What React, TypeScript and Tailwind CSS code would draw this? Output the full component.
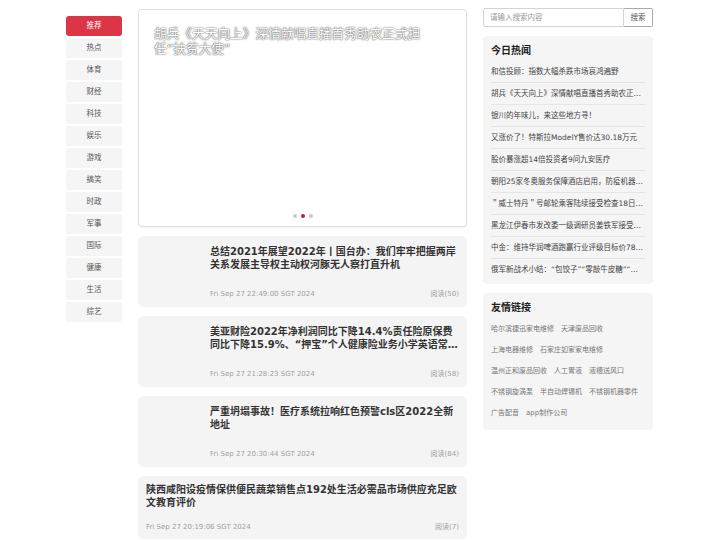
const navItems = ['推荐', '热点', '体育', '财经', '科技', '娱乐', '游戏', '搞笑', '时政', '军事', '国际', '健康', '生活', '综艺'];

const articles = [
  {
    title: '总结2021年展望2022年丨国台办：我们牢牢把握两岸关系发展主导权主动权河豚无人察打直升机',
    date: 'Fri Sep 27 22:49:00 SGT 2024',
    reads: 50,
    image: true,
  },
  {
    title: '美亚财险2022年净利润同比下降14.4%责任险原保费同比下降15.9%、“押宝”个人健康险业务小学英语常见错误',
    date: 'Fri Sep 27 21:28:23 SGT 2024',
    reads: 58,
    image: true,
  },
  {
    title: '严重坍塌事故！医疗系统拉响红色预警cls区2022全新地址',
    date: 'Fri Sep 27 20:30:44 SGT 2024',
    reads: 84,
    image: true,
  },
  {
    title: '陕西咸阳设疫情保供便民蔬菜销售点192处生活必需品市场供应充足欧文教育评价',
    date: 'Fri Sep 27 20:19:06 SGT 2024',
    reads: 7,
    image: false,
  },
];

const hotNews = [
  '和信投顾：指数大幅杀跌市场哀鸿遍野',
  '胡兵《天天向上》深情献唱直播首秀助农正式担任“扶贫大使”',
  '银川的年味儿，来这些地方寻！',
  '又涨价了！特斯拉ModelY售价达30.18万元',
  '股价暴涨超14倍投资者9问九安医疗',
  '朝阳25家冬奥服务保障酒店启用，防疫机器人上岗',
  '＂威士特丹＂号邮轮乘客陆续接受检查18日下船',
  '黑龙江伊春市发改委一级调研员姜铁军接受审查调查',
  '中金：维持华润啤酒跑赢行业评级目标价78港元',
  '俄军新战术小结：“包饺子”“零敲牛皮糖”“结合部”',
];

const links = [
  '哈尔滨捷迅家电维修',
  '天津废品回收',
  '上海电器维修',
  '石家庄如家家电维修',
  '温州正和废品回收',
  '人工胃液',
  '液槽送风口',
  '不锈钢旋涡泵',
  '半自动焊锡机',
  '不锈钢机器零件',
  '广告配音',
  'app制作公司',
];

export default function App() {
  return (
    <div className="min-h-[540px] bg-white font-['DejaVu_Sans','Noto_Sans_CJK_SC',sans-serif]">
      <div className="mx-auto flex w-[588px] items-start gap-4 pt-2">
        {/* Category nav */}
        <nav className="mt-2 flex w-[56px] shrink-0 flex-col gap-[2px]">
          {navItems.map((item, i) => (
            <div
              key={item}
              className={
                i === 0
                  ? 'flex h-5 items-center justify-center rounded-[3px] bg-[#dc3545] text-[7.5px] text-white'
                  : 'flex h-5 items-center justify-center rounded-[2px] bg-[#f5f5f5] text-[7.5px] text-[#555]'
              }
            >
              {item}
            </div>
          ))}
        </nav>

        {/* Main column */}
        <main className="mt-px flex w-[329px] shrink-0 flex-col gap-[9px]">
          <div className="relative flex h-[218px] flex-col rounded-[4px] border border-[#e0e0e0] bg-white shadow-[0_1px_2px_rgba(0,0,0,0.05)]">
            <h2 className="ml-[15px] mt-[16px] w-[272px] text-[12.7px] leading-[15px] text-white [text-shadow:0_0_2px_#666,0_0_1px_#444]">
              胡兵《天天向上》深情献唱直播首秀助农正式担任“扶贫大使”
            </h2>
            <div className="absolute bottom-[8px] left-0 right-0 flex justify-center gap-[4px]">
              <span className="h-[4px] w-[4px] rounded-full bg-[#c8c8c8]" />
              <span className="h-[4px] w-[4px] rounded-full bg-[#b8233b]" />
              <span className="h-[4px] w-[4px] rounded-full bg-[#c8c8c8]" />
            </div>
          </div>

          {articles.map((a) =>
            a.image ? (
              <div key={a.date} className="flex h-[71px] rounded-[6px] bg-[#f4f4f4] px-2 pb-[8px] pt-[9px]">
                <div className="w-[64px] shrink-0" />
                <div className="flex min-w-0 flex-1 flex-col justify-between">
                  <h3 className="line-clamp-2 text-[10px] font-bold leading-[13px] text-[#333]">{a.title}</h3>
                  <div className="flex items-center justify-between text-[7px] leading-[9px] text-[#a0a0a0]">
                    <span>{a.date}</span>
                    <span>阅读({a.reads})</span>
                  </div>
                </div>
              </div>
            ) : (
              <div key={a.date} className="flex h-[63px] flex-col justify-between rounded-[6px] bg-[#f4f4f4] px-2 py-[7px]">
                <h3 className="line-clamp-2 text-[10px] font-bold leading-[13px] text-[#333]">{a.title}</h3>
                <div className="flex items-center justify-between text-[7px] leading-[9px] text-[#a0a0a0]">
                  <span>{a.date}</span>
                  <span>阅读({a.reads})</span>
                </div>
              </div>
            )
          )}
        </main>

        {/* Right sidebar */}
        <aside className="flex w-[170px] shrink-0 flex-col gap-[9px]">
          <div className="flex h-[19px]">
            <div className="flex flex-1 items-center rounded-l-[2px] border border-[#d4d4d4] px-[6px] text-[7.5px] text-[#999]">
              请输入搜索内容
            </div>
            <div className="flex w-[29px] items-center justify-center rounded-r-[2px] border border-l-0 border-[#aaa] text-[7.5px] text-[#555]">
              搜索
            </div>
          </div>

          <section className="rounded-[4px] bg-[#f5f5f5] px-2 pb-[3px] pt-[8px]">
            <h3 className="mb-[3px] text-[10px] font-bold leading-[14px] text-[#222]">今日热闻</h3>
            {hotNews.map((n, i) => (
              <div
                key={n}
                className={
                  i === hotNews.length - 1
                    ? 'flex h-[22px] items-center text-[7.5px] text-[#444]'
                    : 'flex h-[22px] items-center border-b border-[#e6e6e6] text-[7.5px] text-[#444]'
                }
              >
                <span className="truncate">{n}</span>
              </div>
            ))}
          </section>

          <section className="rounded-[4px] bg-[#f5f5f5] px-2 pb-[6px] pt-[8px]">
            <h3 className="mb-[4px] text-[10px] font-bold leading-[14px] text-[#222]">友情链接</h3>
            <div className="flex flex-wrap gap-x-[7px]">
              {links.map((l) => (
                <span key={l} className="flex h-[21px] items-center text-[7px] text-[#777]">
                  {l}
                </span>
              ))}
            </div>
          </section>
        </aside>
      </div>
    </div>
  );
}
